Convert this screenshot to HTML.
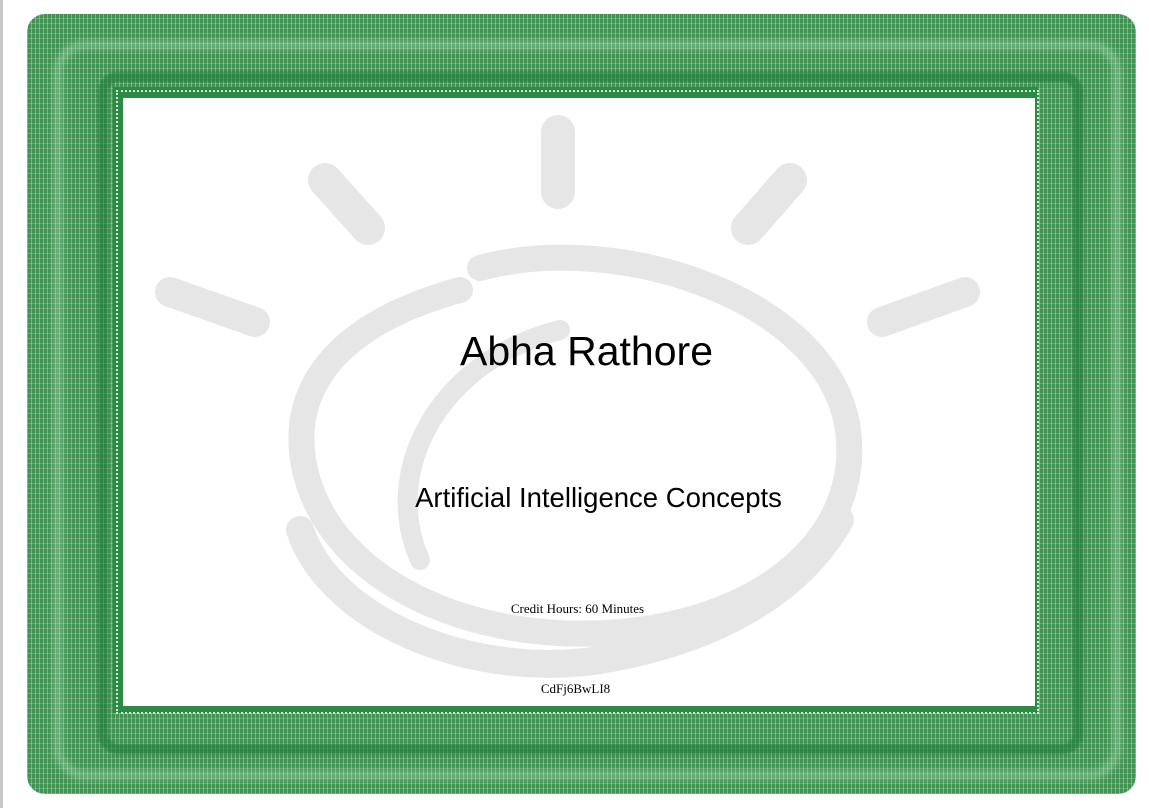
<!DOCTYPE html>
<html><head><meta charset="utf-8"><style>
html,body{margin:0;padding:0;width:1149px;height:808px;background:#fff;overflow:hidden;position:relative;font-family:"Liberation Sans",sans-serif}
.strip{position:absolute;left:0;top:0;width:3px;height:808px;background:#c8c8c8}
.border{position:absolute;left:27px;top:14px;width:1109px;height:780px;border-radius:18px;
background:
repeating-linear-gradient(90deg,rgba(255,255,255,.3) 0 1px,rgba(0,0,0,0) 1px 4px),
repeating-linear-gradient(0deg,rgba(255,255,255,.2) 0 1px,rgba(0,0,0,0) 1px 5px),
#409352;}
.glow{position:absolute;left:55px;top:42px;width:1053px;height:724px;border:6px solid rgba(200,240,210,.5);border-radius:30px;filter:blur(4px)}
.dark{position:absolute;left:98px;top:72px;width:965px;height:662px;border:10px solid #1f7a38;border-radius:20px;opacity:.55;filter:blur(1px)}
.frame{position:absolute;left:113px;top:87px;width:925px;height:626px;background:#2d8a45;}
.frame2{position:absolute;left:116px;top:90px;width:919px;height:620px;border:2px dotted #c9ecd2}
.inner{position:absolute;left:123px;top:98px;width:912px;height:608px;background:#fff}
.t{position:absolute;left:0;width:1149px;text-align:center;color:#000}
</style></head><body>
<div class="strip"></div>
<div class="border"></div>
<div class="glow"></div>
<div class="dark"></div>
<div class="frame"></div>
<div class="frame2"></div>
<div class="inner"></div>
<svg style="position:absolute;left:0;top:0" width="1149" height="808">
<g stroke="#e6e6e6" stroke-linecap="round" fill="none">
<line x1="558" y1="132" x2="558" y2="192" stroke-width="34"/>
<line x1="325" y1="180" x2="368" y2="228" stroke-width="34"/>
<line x1="790" y1="180" x2="748" y2="228" stroke-width="34"/>
<line x1="170" y1="292" x2="255" y2="322" stroke-width="30"/>
<line x1="965" y1="292" x2="882" y2="322" stroke-width="30"/>
<path d="M480 268 C620 230 830 300 848 430 C862 540 760 620 620 632 C470 645 330 580 305 470 C285 380 350 320 460 290" stroke-width="26"/>
<path d="M300 530 C330 620 470 680 600 660 C720 640 800 590 840 520" stroke-width="28"/>
<path d="M420 560 C380 470 440 360 560 330" stroke-width="20"/>
</g>
</svg>
<div class="t" style="top:328px;font-size:41px;left:12px">Abha Rathore</div>
<div class="t" style="top:482px;font-size:27.5px;left:24px">Artificial Intelligence Concepts</div>
<div class="t" style="top:601px;font-size:13px;font-family:'Liberation Serif',serif;left:3px">Credit Hours: 60 Minutes</div>
<div class="t" style="top:681px;font-size:13px;font-family:'Liberation Serif',serif;left:1px">CdFj6BwLI8</div>
</body></html>
